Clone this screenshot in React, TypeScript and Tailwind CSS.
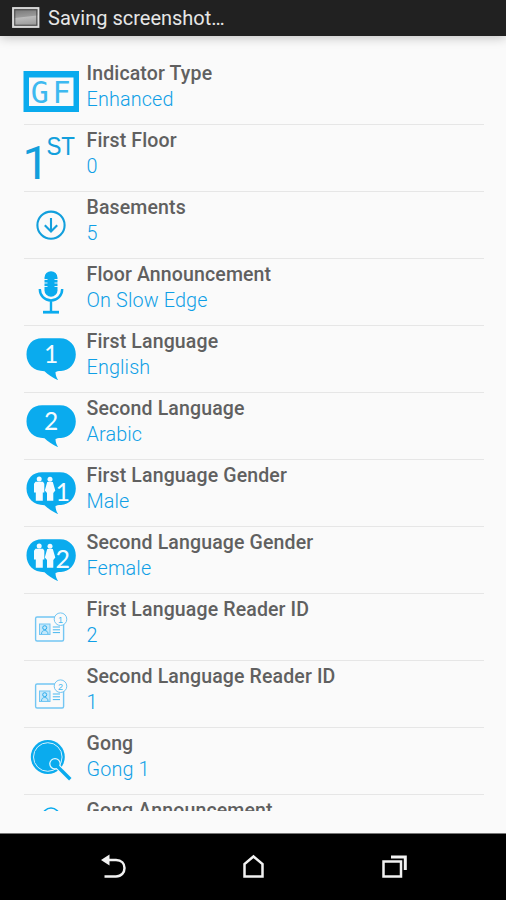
import React from 'react';

const BLUE = '#0aabee';

interface Setting {
  title: string;
  value: string;
  icon: React.ReactNode;
}

const IndicatorIcon = () => (
  <g>
    <path d="M-.5 13H55V54H-.5ZM5 19.5V48H49.5V19.5Z" fill={BLUE} fillRule="evenodd" />
    <g fontFamily="DejaVu Sans Mono" fontSize="30" fill="#3db9f0">
      <text x="6.8" y="44.5">G</text>
      <text x="28.5" y="44.5">F</text>
    </g>
  </g>
);

const FirstFloorIcon = () => (
  <g fill="#129fdc" stroke="#129fdc">
    <text x="-1.5" y="53.8" fontFamily="Roboto" fontSize="47" strokeWidth="0.1">1</text>
    <text x="22.5" y="30.4" fontFamily="Liberation Sans" fontSize="25" strokeWidth="0.1" textLength="28.5" lengthAdjust="spacingAndGlyphs">
      ST
    </text>
  </g>
);

const BasementsIcon = () => (
  <g fill="none" stroke="#129fdc" strokeWidth="2.1">
    <circle cx="27" cy="33.2" r="13.6" />
    <path d="M27 26V39.5M20.8 33.3L27 39.5L33.2 33.3" />
  </g>
);

const MicIcon = () => (
  <g>
    <rect x="20.5" y="12.2" width="13" height="25.5" rx="6.5" fill={BLUE} />
    <path d="M20 20.5H23.5M20 24H23.5M20 27.5H23.5M30.5 20.5H34M30.5 24H34M30.5 27.5H34" stroke="#fafafa" strokeWidth="0.9" />
    <path d="M15.8 30C15.8 36.5 20.5 41.5 27 41.5S38.2 36.5 38.2 30M27 41.5V53" fill="none" stroke={BLUE} strokeWidth="2.4" />
    <path d="M19 53.2H35" stroke={BLUE} strokeWidth="2.8" />
  </g>
);

const Bubble = ({ children }: { children: React.ReactNode }) => (
  <g>
    <path
      d="M18 12.3H36C46 12.3 51.8 20 51.8 28.5C51.8 37.5 45.5 44.8 37 45C34 45 32.5 45.5 31.5 46C31.5 49 32.5 51.5 34.2 54.2C28.5 51.5 24 48.5 20.5 45.2C9.5 45.2 2.5 38 2.5 28.5C2.5 19 8.5 12.3 18 12.3Z"
      fill={BLUE}
    />
    {children}
  </g>
);

const LanguageIcon = ({ digit }: { digit: string }) => (
  <Bubble>
    <text x="27" y="36.8" fontFamily="Lato" fontSize="24.5" fill="#f4fbff" textAnchor="middle">
      {digit}
    </text>
  </Bubble>
);

const GenderIcon = ({ digit }: { digit: string }) => (
  <Bubble>
    <g fill="#f4fbff">
      <circle cx="15.2" cy="19" r="2.5" />
      <path d="M11.5 21.8H19L20.3 23.8V32.5H18.8V40.8H11.8V32.5H10V23.8Z" />
      <circle cx="26" cy="19.3" r="2.5" />
      <path d="M23.2 22H28.8L31.3 30.5L29.3 33V40.8H23V33L20.8 30.5Z" />
    </g>
    <text x="38.8" y="41.2" fontFamily="Lato" fontSize="25" fill="#f4fbff" textAnchor="middle">
      {digit}
    </text>
  </Bubble>
);

const ReaderIcon = ({ digit }: { digit: string }) => (
  <g fill="none" stroke="#73c6f3" strokeWidth="1">
    <rect x="11.6" y="23" width="28" height="24" rx="1.5" strokeWidth="1.4" />
    <rect x="15.5" y="30" width="10.5" height="10.5" fill="#c5e8fa" />
    <circle cx="20.7" cy="33.7" r="2" stroke="#2aabed" />
    <path d="M17.5 40C17.5 37.5 19 36.5 20.7 36.5S24 37.5 24 40M28.8 33H36M28.8 35.8H36M28.8 38.6H36" stroke="#46b7ef" />
    <circle cx="36.5" cy="25.2" r="6.3" fill="#fafafa" />
    <text x="36.5" y="28.5" fontFamily="Liberation Sans" fontSize="9" fill="#46b7ef" stroke="none" textAnchor="middle">
      {digit}
    </text>
  </g>
);

const GongIcon = () => (
  <g>
    <circle cx="23.8" cy="29" r="17" fill={BLUE} />
    <circle cx="23.8" cy="29" r="14.3" fill="none" stroke="#d5f1fd" strokeWidth="1" />
    <path d="M31 36L46 51" stroke="#fafafa" strokeWidth="5.5" />
    <circle cx="31" cy="35.8" r="5.2" fill={BLUE} stroke="#e4f6fe" strokeWidth="1.3" />
    <path d="M31 36L46.3 51.3" stroke={BLUE} strokeWidth="3.4" />
  </g>
);

const GongAnnouncementIcon = () => <circle cx="27" cy="21.5" r="8.5" fill="none" stroke={BLUE} strokeWidth="1.6" />;

const SETTINGS: Setting[] = [
  { title: 'Indicator Type', value: 'Enhanced', icon: <IndicatorIcon /> },
  { title: 'First Floor', value: '0', icon: <FirstFloorIcon /> },
  { title: 'Basements', value: '5', icon: <BasementsIcon /> },
  { title: 'Floor Announcement', value: 'On Slow Edge', icon: <MicIcon /> },
  { title: 'First Language', value: 'English', icon: <LanguageIcon digit="1" /> },
  { title: 'Second Language', value: 'Arabic', icon: <LanguageIcon digit="2" /> },
  { title: 'First Language Gender', value: 'Male', icon: <GenderIcon digit="1" /> },
  { title: 'Second Language Gender', value: 'Female', icon: <GenderIcon digit="2" /> },
  { title: 'First Language Reader ID', value: '2', icon: <ReaderIcon digit="1" /> },
  { title: 'Second Language Reader ID', value: '1', icon: <ReaderIcon digit="2" /> },
  { title: 'Gong', value: 'Gong 1', icon: <GongIcon /> },
  { title: 'Gong Announcement', value: '', icon: <GongAnnouncementIcon /> },
];

const StatusBar = () => (
  <header className="h-9 shrink-0 bg-[#212121] flex items-center pl-3 gap-2 shadow-[0_2px_10px_rgba(0,0,0,0.22)]">
    <svg width="28" height="22" viewBox="0 0 28 22">
      <defs>
        <linearGradient id="thumb" x1="0" y1="0" x2="0.15" y2="1">
          <stop offset="0" stopColor="#707070" />
          <stop offset="0.5" stopColor="#999" />
          <stop offset="0.55" stopColor="#bbb" />
          <stop offset="1" stopColor="#999" />
        </linearGradient>
      </defs>
      <rect x="1" y="1" width="25.5" height="19" fill="url(#thumb)" stroke="#dedede" strokeWidth="1.8" />
      <rect x="2.8" y="2.8" width="22" height="15.4" fill="none" stroke="#4a4a4a" strokeWidth="1" />
    </svg>
    <span className="text-[20px] leading-9 text-[#e6e6e6]">Saving screenshot…</span>
  </header>
);

const NavBar = () => (
  <nav className="h-[67px] shrink-0 bg-black border-t border-[#777] flex justify-center">
    <svg width="506" height="66" viewBox="0 834 506 66" fill="none" stroke="#f2f2f2" strokeWidth="2.5">
      <path d="M108 860H116C121.5 860 124.5 863.5 124.5 868S121.5 876.5 116 876.5H104.5" />
      <path d="M101 860L109.5 854.5V865.5Z" fill="#f2f2f2" stroke="none" />
      <path d="M244.5 876.5V864L253.5 856.5L262.5 864V876.5Z" />
      <path d="M383.5 861.5H401V876.5H383.5Z" />
      <path d="M391 857H405.3V870" strokeWidth="3" />
    </svg>
  </nav>
);

export default function App() {
  return (
    <div className="w-full h-[900px] bg-[#fafafa] flex flex-col overflow-hidden font-['Roboto',sans-serif]">
      <StatusBar />
      <main className="mt-[21.5px] h-[753px] shrink-0 overflow-hidden pl-6 pr-[22px]">
        {SETTINGS.map((item) => (
          <div key={item.title} className="h-[67.08px] flex gap-[6.5px] border-b-[1.5px] border-[#e6e6e6]">
            <svg width="56" height="67" viewBox="0 0 56 67" className="shrink-0 overflow-visible">
              {item.icon}
            </svg>
            <div className="pt-[2px] whitespace-nowrap">
              <h2 className="text-[19.5px] leading-[27px] font-medium tracking-[0.14px] text-[#606060]">{item.title}</h2>
              <p className="text-[19.8px] leading-[26px] font-light tracking-[0.14px] text-[#0f9fe6]">{item.value}</p>
            </div>
          </div>
        ))}
      </main>
      <div className="grow" />
      <NavBar />
    </div>
  );
}
